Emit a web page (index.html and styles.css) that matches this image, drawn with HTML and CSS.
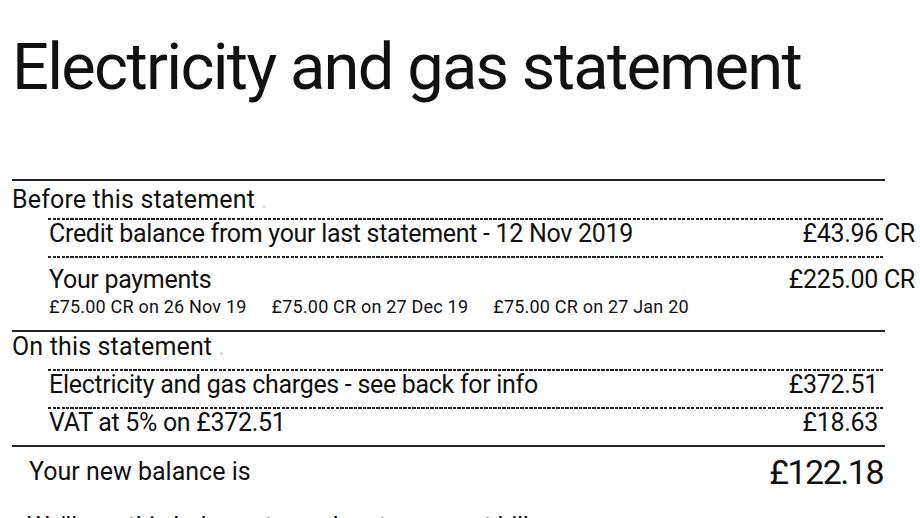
FILE: index.html
```html
<!DOCTYPE html>
<html lang="en">
<head>
<meta charset="utf-8">
<title>Electricity and gas statement</title>
<link rel="stylesheet" href="styles.css">
</head>
<body>
<div class="page">
  <h1 class="title">Electricity and gas statement</h1>

  <section class="block">
    <div class="head head-before">Before this statement<span class="dot">.</span></div>
    <div class="row">
      <span class="label">Credit balance from your last statement - 12 Nov 2019</span>
      <span class="amt">£43.96<span class="cr"> CR</span></span>
    </div>
    <div class="row pay">
      <div class="line">
        <span class="label">Your payments</span>
        <span class="amt">£225.00<span class="cr"> CR</span></span>
      </div>
      <div class="small">
        <span>£75.00 CR on 26 Nov 19</span>
        <span>£75.00 CR on 27 Dec 19</span>
        <span>£75.00 CR on 27 Jan 20</span>
      </div>
    </div>
  </section>

  <section class="block">
    <div class="head head-on">On this statement<span class="dot">.</span></div>
    <div class="row">
      <span class="label">Electricity and gas charges - see back for info</span>
      <span class="amt">£372.51</span>
    </div>
    <div class="row">
      <span class="label">VAT at 5% on £372.51</span>
      <span class="amt">£18.63</span>
    </div>
  </section>

  <div class="total">
    <span class="total-label">Your new balance is</span>
    <span class="total-amt">£122.18</span>
  </div>

  <p class="note">We'll use this balance to work out your next bill.</p>
</div>
</body>
</html>
```
FILE: styles.css
```css
html, body {
  margin: 0;
  padding: 0;
  background: #ffffff;
}

body {
  font-family: "Roboto", "Liberation Sans", sans-serif;
  color: #111111;
  overflow: hidden;
}

.page {
  width: 873px;
  padding: 0 35px 0 12px;
}

.title {
  font-size: 65px;
  line-height: 70px;
  font-weight: 400;
  letter-spacing: -1.7px;
  margin: 32px 0 77px 0;
  white-space: nowrap;
}

.block {
  border-top: 2px solid #222222;
}

.head {
  font-size: 25px;
  line-height: 22px;
  letter-spacing: 0.15px;
  white-space: nowrap;
}

.head-before {
  padding: 8px 0 7px 0;
}

.head-on {
  padding: 4px 0 11px 0;
}

.dot {
  color: #d4d4d4;
  margin-left: 6px;
}

.row {
  margin-left: 36px;
  padding: 5px 7px 11px 1px;
  font-size: 25px;
  line-height: 22px;
  letter-spacing: -0.3px;
  display: flex;
  justify-content: space-between;
  background-image: repeating-linear-gradient(90deg, #222222 0 3px, transparent 3px 4.5px);
  background-size: 100% 2px;
  background-repeat: no-repeat;
  background-position: top left;
  white-space: nowrap;
}

.row.pay {
  display: block;
  padding-top: 13px;
  padding-bottom: 13px;
}

.line {
  display: flex;
  justify-content: space-between;
}

.amt {
  white-space: nowrap;
}

.cr {
  display: inline-block;
  width: 0;
  overflow: visible;
  white-space: pre;
}

.small {
  display: flex;
  gap: 25px;
  margin-top: 5px;
  font-size: 18px;
  line-height: 21px;
  letter-spacing: 0.2px;
}

.total {
  border-top: 2px solid #222222;
  display: flex;
  align-items: center;
  justify-content: space-between;
  padding: 5px 2px 0 17px;
}

.total-label {
  font-size: 25px;
  line-height: 22px;
  letter-spacing: 0;
}

.total-amt {
  font-size: 34px;
  line-height: 40px;
  letter-spacing: -1.5px;
}

.note {
  margin: 24px 0 0 15px;
  font-size: 25px;
  line-height: 22px;
  letter-spacing: -0.3px;
  white-space: nowrap;
}
```
